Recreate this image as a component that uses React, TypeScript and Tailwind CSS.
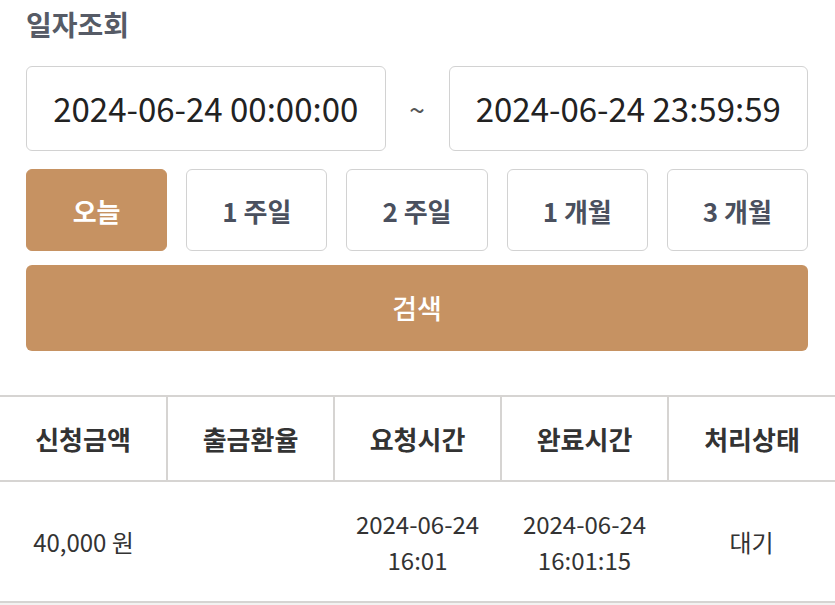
import React, { useState } from 'react';

type Period = 'today' | 'w1' | 'w2' | 'm1' | 'm3';

const periods: { key: Period; label: string }[] = [
  { key: 'today', label: '오늘' },
  { key: 'w1', label: '1 주일' },
  { key: 'w2', label: '2 주일' },
  { key: 'm1', label: '1 개월' },
  { key: 'm3', label: '3 개월' },
];

const headers = ['신청금액', '출금환율', '요청시간', '완료시간', '처리상태'];

const App: React.FC = () => {
  const [active, setActive] = useState<Period>('today');

  return (
    <div className="w-[835px] min-h-[605px] bg-white font-['Noto_Sans_CJK_KR','Noto_Sans',sans-serif]">
      <div className="pl-[26px] pr-[27px] pt-[6px]">
        <h2 className="text-[28px] leading-[36px] font-bold text-[#565b66]">일자조회</h2>

        <div className="mt-[24px] flex items-center">
          <div className="flex-1 h-[85px] flex items-center justify-center border border-[#d2d2d2] rounded-[6px] text-[33px] text-[#222]">
            2024-06-24 00:00:00
          </div>
          <div className="w-[63px] text-center text-[28px] leading-none text-[#555]">~</div>
          <div className="flex-1 h-[85px] flex items-center justify-center border border-[#d2d2d2] rounded-[6px] text-[33px] text-[#222]">
            2024-06-24 23:59:59
          </div>
        </div>

        <div className="mt-[18px] grid grid-cols-5 gap-[19px]">
          {periods.map((p) => (
            <button
              key={p.key}
              onClick={() => setActive(p.key)}
              className={`h-[82px] rounded-[6px] border text-[26px] font-bold ${
                active === p.key
                  ? 'bg-[#c69262] border-[#c69262] text-white'
                  : 'bg-white border-[#d2d2d2] text-[#4a505e]'
              }`}
            >
              {p.label}
            </button>
          ))}
        </div>

        <button className="mt-[14px] w-full h-[86px] rounded-[6px] bg-[#c69262] text-white text-[27px] font-medium">
          검색
        </button>
      </div>

      <table className="mt-[44px] w-full table-fixed border-collapse">
        <thead>
          <tr className="h-[85px] border-t-2 border-b-2 border-[#d6d4d2]">
            {headers.map((h, i) => (
              <th
                key={h}
                className={`text-[26px] font-bold text-[#333] ${i > 0 ? 'border-l-2 border-[#d6d4d2]' : ''}`}
              >
                {h}
              </th>
            ))}
          </tr>
        </thead>
        <tbody>
          <tr className="h-[121px] border-b-2 border-[#d6d4d2] text-[24px] leading-[36px] text-[#333] text-center">
            <td>40,000 원</td>
            <td></td>
            <td>
              2024-06-24
              <br />
              16:01
            </td>
            <td>
              2024-06-24
              <br />
              16:01:15
            </td>
            <td>대기</td>
          </tr>
        </tbody>
      </table>
      <div className="h-[4px] bg-[#f3f2f1]" />
    </div>
  );
};

export default App;
